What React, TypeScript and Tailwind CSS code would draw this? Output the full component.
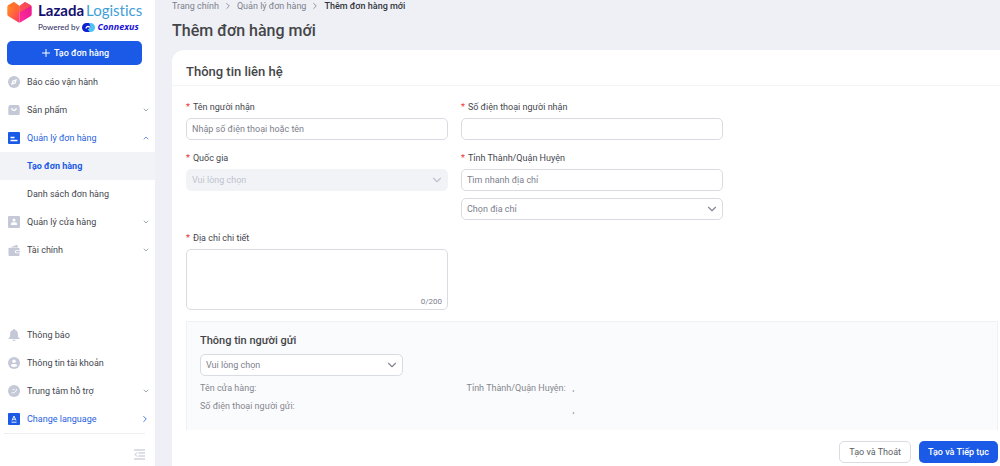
import React, { useState } from "react";
import { LuChevronDown, LuChevronRight, LuChevronUp, LuPlus } from "react-icons/lu";

interface IMenu {
  id: string;
  title: string;
  icon: React.ReactNode;
  arrow?: "down" | "up" | "right";
  active?: boolean;
  children?: string[];
}

const topMenu: IMenu[] = [
  {
    id: "report",
    title: "Báo cáo vận hành",
    icon: (
      <>
        <circle cx="6" cy="6" r="6" fill="currentColor" />
        <path d="M9 3 7.6 7.6 3 9l1.400-4.600z" fill="#fff" />
        <circle cx="6" cy="6" r="0.8" fill="currentColor" />
      </>
    ),
  },
  {
    id: "product",
    title: "Sản phẩm",
    arrow: "down",
    icon: (
      <>
        <path d="M1.5 1h9l1.2 2V10a1 1 0 0 1-1 1H1.3a1 1 0 0 1-1-1V3z" fill="currentColor" />
        <path d="M3.8 4a2.200 2.400 0 0 0 4.400 0" fill="none" stroke="#fff" strokeWidth="1.2" />
      </>
    ),
  },
  {
    id: "order",
    title: "Quản lý đơn hàng",
    arrow: "up",
    active: true,
    children: ["Tạo đơn hàng", "Danh sách đơn hàng"],
    icon: (
      <>
        <rect width="12" height="12" rx="1" fill="currentColor" />
        <path d="M2.500 5.500h4M2.500 8.500h7" stroke="#fff" strokeWidth="1.3" />
      </>
    ),
  },
  {
    id: "store",
    title: "Quản lý cửa hàng",
    arrow: "down",
    icon: (
      <>
        <rect width="12" height="12" rx="1" fill="currentColor" />
        <circle cx="6" cy="4" r="1.500" fill="#fff" />
        <path d="M3 9V8c0-1 .8-1.700 1.800-1.700h2.400C8.200 6.300 9 7 9 8v1z" fill="#fff" />
      </>
    ),
  },
  {
    id: "finance",
    title: "Tài chính",
    arrow: "down",
    icon: (
      <>
        <path d="M2 3.500 9 .8l1.200 2.700z" fill="currentColor" />
        <path d="M.5 4h11v2H8.500a1.500 1.500 0 0 0 0 3.300h3v1.700a1 1 0 0 1-1 1h-9a1 1 0 0 1-1-1z" fill="currentColor" />
        <rect x="8" y="6.700" width="4" height="1.900" rx="0.9" fill="currentColor" />
      </>
    ),
  },
];

const bottomMenu: IMenu[] = [
  {
    id: "notice",
    title: "Thông báo",
    icon: (
      <>
        <path d="M6 0c.6 0 1 .4 1 1 1.700.4 2.900 1.900 2.900 3.800V7.500L11.800 10H.2l1.900-2.500V4.800C2.100 2.900 3.300 1.400 5 1c0-.6.400-1 1-1z" fill="currentColor" />
        <path d="M4.500 10.700h3a1.500 1.300 0 0 1-3 0z" fill="currentColor" />
      </>
    ),
  },
  {
    id: "account",
    title: "Thông tin tài khoản",
    icon: (
      <>
        <circle cx="6" cy="6" r="6" fill="currentColor" />
        <circle cx="6" cy="4.300" r="1.800" fill="#fff" />
        <path d="M2.600 8.600C3.200 7.400 4.500 7 6 7s2.800.4 3.400 1.600C8.600 9.600 7.400 10 6 10s-2.600-.4-3.400-1.400z" fill="#fff" />
      </>
    ),
  },
  {
    id: "support",
    title: "Trung tâm hỗ trợ",
    arrow: "down",
    icon: (
      <>
        <circle cx="6" cy="6" r="6" fill="currentColor" />
        <path d="M3.500 7.800c2.500.6 4.800-.6 5-3.800M4.500 4.500h2" fill="none" stroke="#fff" strokeWidth="0.9" />
      </>
    ),
  },
  {
    id: "language",
    title: "Change language",
    arrow: "right",
    active: true,
    icon: (
      <>
        <rect width="12" height="12" rx="1" fill="currentColor" />
        <path d="M4 7.500 6 3l2 4.500M4.800 6.200h2.400M3.500 9.200h5" fill="none" stroke="#fff" strokeWidth="0.9" />
      </>
    ),
  },
];

const Logo = () => (
  <a href="#" className="mx-[7px] flex h-9 gap-1.5">
    <svg viewBox="0 0 25 21" className="mt-[2px] h-[21px] w-[25px] shrink-0">
      <defs>
        <linearGradient id="heartLeft" x1="0" y1="0" x2="1" y2="1">
          <stop offset="0" stopColor="#ff9a1a" />
          <stop offset="1" stopColor="#ff3560" />
        </linearGradient>
        <linearGradient id="heartRight" x1="1" y1="0" x2="0" y2="1">
          <stop offset="0" stopColor="#e8168a" />
          <stop offset="1" stopColor="#ff2fa0" />
        </linearGradient>
      </defs>
      <path d="M1.500 3 6 .4c.6-.3 1.200-.3 1.800 0L12.500 4v16.500c-.4 0-.8-.1-1.200-.3L1.500 14.200C.8 13.800.3 13.200.3 12.300V5c0-.9.4-1.600 1.200-2z" fill="url(#heartLeft)" />
      <path d="M23.500 3 19 .4c-.6-.3-1.200-.3-1.800 0L12.500 4v16.500c.4 0 .8-.1 1.200-.3l9.800-6c.7-.4 1.200-1 1.200-1.900V5c0-.9-.4-1.600-1.200-2z" fill="url(#heartRight)" />
      <path d="M.8 3.800 12.500 10.500 24.200 3.800 19 .4c-.6-.3-1.200-.3-1.800 0L12.500 4 7.800.4C7.200 0 6.600.1 6 .4z" fill="#ff6a2a" opacity="0.6" />
    </svg>
    <div className="font-[Lato,sans-serif] whitespace-nowrap [font-variant-ligatures:none]">
      <div className="flex h-5 items-center gap-0.5 text-[15px] leading-5">
        <span className="font-bold text-[#140f6e]">Lazada</span>
        <span className="text-[#3f9fd8]">Logistics</span>
      </div>
      <div className="flex h-3.5 items-center text-[8px] leading-3">
        <span className="text-[#2b2a5e]">Powered by</span>
        <svg viewBox="0 0 13 9" className="mr-[3px] ml-0.5 h-[9px] w-[13px]">
          <path d="M4.500 0h3L9 4 6.500 6.500 8 9H4.500a4.500 4.500 0 0 1 0-9z" fill="#0d1fd0" />
          <path d="M7 0h1.500a4.500 4.500 0 0 1 0 9H8L5.500 6.500 9 5z" fill="#4cc4f2" />
          <path d="M4 5.500C4.300 3.500 6 2.800 8 4.300" fill="none" stroke="#fff" strokeWidth="1.300" />
        </svg>
        <span className="font-['Open_Sans',sans-serif] text-[9px] font-bold text-[#1a12d6] italic">Connexus</span>
      </div>
    </div>
  </a>
);

const MenuList = ({ items }: { items: IMenu[] }) => {
  const [sub, setSub] = useState<string>("Tạo đơn hàng");

  return (
    <ul>
      {items.map((item) => (
        <li key={item.id}>
          <button
            type="button"
            className={`flex h-7 w-full items-center pr-[5px] pl-2 text-left ${
              item.active ? "text-[#1f5fe0]" : "text-[#44464e]"
            }`}
          >
            <svg
              viewBox="0 0 12 12"
              className={`mr-[7px] size-3 shrink-0 ${item.active ? "text-[#1a5ae6]" : "text-[#c5c8d6]"}`}
            >
              {item.icon}
            </svg>
            <span className="flex-1">{item.title}</span>
            {item.arrow === "down" && <LuChevronDown className="size-2 text-[#777b88]" />}
            {item.arrow === "up" && <LuChevronUp className="size-2" />}
            {item.arrow === "right" && <LuChevronRight className="size-2.5" />}
          </button>
          {item.children && (
            <ul>
              {item.children.map((child) => (
                <li key={child}>
                  <button
                    type="button"
                    onClick={() => setSub(child)}
                    className={`h-7 w-full pl-[27px] text-left ${
                      sub === child ? "bg-[#f2f3f7] font-bold text-[#1a5ae6]" : "text-[#44464e]"
                    }`}
                  >
                    {child}
                  </button>
                </li>
              ))}
            </ul>
          )}
        </li>
      ))}
    </ul>
  );
};

const inputStyle =
  "block h-[22px] w-full rounded-[5px] border border-[#d9dbe2] bg-white px-[5px] text-[#33353c] placeholder:text-[#7d808c]";

const Label = ({ id, children }: { id: string; children: React.ReactNode }) => (
  <label htmlFor={id} className="mb-[3px] block h-4 leading-4 text-[#44464e]">
    <span className="mr-[3px] text-[#f0312f]">*</span>
    {children}
  </label>
);

interface ISelect {
  id: string;
  text: string;
  disabled?: boolean;
}

const Select = ({ id, text, disabled }: ISelect) => (
  <div className="relative">
    <select
      id={id}
      aria-label={text}
      disabled={disabled}
      className={`block h-[22px] w-full appearance-none rounded-[5px] border px-[5px] opacity-100 ${
        disabled ? "border-[#f2f3f7] bg-[#f2f3f7] text-[#c0c3cf]" : "border-[#d9dbe2] bg-white text-[#7d808c]"
      }`}
    >
      <option>{text}</option>
    </select>
    <LuChevronDown
      className={`pointer-events-none absolute top-1 right-1 size-3.5 ${
        disabled ? "text-[#bfc2cd]" : "text-[#858894]"
      }`}
    />
  </div>
);

const App: React.FC = () => {
  const [address, setAddress] = useState<string>("");

  return (
    <div className="flex h-screen overflow-hidden bg-[#eef0f5] font-[Roboto,sans-serif] text-[9px] leading-4">
      <aside className="flex w-[155px] shrink-0 flex-col bg-white">
        <Logo />
        <button
          type="button"
          className="mt-[5px] mr-[13px] mb-[3px] ml-[7px] flex h-6 shrink-0 items-center justify-center gap-0.5 rounded-[5px] bg-[#1a5ae6] font-medium text-white"
        >
          <LuPlus className="size-3" />
          Tạo đơn hàng
        </button>
        <nav className="flex flex-1 flex-col justify-between">
          <MenuList items={topMenu} />
          <MenuList items={bottomMenu} />
        </nav>
        <div className="mr-2.5 ml-1 flex h-[33px] shrink-0 items-center justify-end border-t border-[#eceef2]">
          <button type="button" aria-label="Thu gọn">
            <svg viewBox="0 0 11 11" className="mt-2 size-[11px]" fill="none" stroke="#b9bccb">
              <path d="M0 1h11M4.500 4H11M4.500 7H11M0 10h11M3 3.500l-2 2 2 2" />
            </svg>
          </button>
        </div>
      </aside>

      <div className="ml-[17px] flex min-w-0 flex-1 flex-col">
        <nav className="flex h-3 shrink-0 items-center gap-1 text-[#7d808c]">
          <a href="#">Trang chính</a>
          <LuChevronRight className="size-2.5" />
          <a href="#">Quản lý đơn hàng</a>
          <LuChevronRight className="size-2.5" />
          <span className="font-medium text-[#33353c]">Thêm đơn hàng mới</span>
        </nav>
        <h1 className="my-2 text-[16px] leading-[22px] font-medium text-[#444548]">Thêm đơn hàng mới</h1>

        <main className="min-h-0 flex-1 overflow-hidden rounded-tl-[12px] bg-white">
          <h2 className="h-9 border-b border-[#f3f4f7] pt-1 pl-3.5 text-[13px] leading-9 font-medium text-[#444548]">
            Thông tin liên hệ
          </h2>
          <form className="pt-[13px] pr-0.5 pl-3.5">
            <div className="grid grid-cols-3 gap-x-[13px] gap-y-2.5">
              <div>
                <Label id="name">Tên người nhận</Label>
                <input id="name" className={inputStyle} placeholder="Nhập số điện thoại hoặc tên" />
              </div>
              <div>
                <Label id="phone">Số điện thoại người nhận</Label>
                <input id="phone" className={inputStyle} />
              </div>
              <div className="col-start-1">
                <Label id="country">Quốc gia</Label>
                <Select id="country" text="Vui lòng chọn" disabled />
              </div>
              <div className="space-y-[7px]">
                <div>
                  <Label id="region">Tỉnh Thành/Quận Huyện</Label>
                  <input id="region" className={inputStyle} placeholder="Tìm nhanh địa chỉ" />
                </div>
                <Select id="regionSelect" text="Chọn địa chỉ" />
              </div>
              <div className="relative col-start-1">
                <Label id="address">Địa chỉ chi tiết</Label>
                <textarea
                  id="address"
                  maxLength={200}
                  value={address}
                  onChange={(e) => setAddress(e.target.value)}
                  className="block h-[61px] w-full resize-none rounded-[5px] border border-[#d9dbe2] px-[5px] py-1"
                />
                <span className="absolute right-1.5 bottom-0 text-[8px] text-[#7d808c]">{address.length}/200</span>
              </div>
            </div>

            <section className="mt-[11px] border border-[#f0f1f5] bg-[#fafbfd] px-[13px] pt-[11px] pb-8 text-[#85878e]">
              <h3 className="mb-[5px] text-[11px] leading-4 font-medium text-[#444548]">Thông tin người gửi</h3>
              <div className="w-[203px]">
                <Select id="sender" text="Vui lòng chọn" />
              </div>
              <div className="mt-[3px] grid grid-cols-[34%_66%] leading-[18px] whitespace-nowrap">
                <p>Tên cửa hàng:</p>
                <p>
                  <span className="inline-block w-[106px]">Tỉnh Thành/Quận Huyện:</span>,
                </p>
                <p>Số điện thoại người gửi:</p>
                <p className="pt-1 pl-[106px]">,</p>
              </div>
            </section>
          </form>
        </main>

        <footer className="flex h-9 shrink-0 items-center justify-end gap-2 bg-white pt-2 pr-0.5">
          <button type="button" className="h-[22px] rounded-[5px] border border-[#d9dbe2] px-[9px] text-[#5d5f66]">
            Tạo và Thoát
          </button>
          <button type="button" className="h-[22px] rounded-[5px] bg-[#1a5ae6] px-[9px] font-medium text-white">
            Tạo và Tiếp tục
          </button>
        </footer>
      </div>
    </div>
  );
};

export default App;
